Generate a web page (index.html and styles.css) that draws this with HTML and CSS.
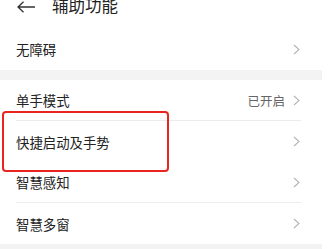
FILE: index.html
```html
<!DOCTYPE html>
<html lang="zh-CN">
<head>
  <meta charset="UTF-8">
  <meta name="viewport" content="width=device-width, initial-scale=1.0">
  <title>辅助功能</title>
  <link rel="stylesheet" href="styles.css">
</head>
<body>
  <div class="page">
    <div class="topbar">
      <svg class="back" width="19" height="12" viewBox="0 0 19 12">
        <path d="M1 6 H18 M6.5 0.8 L1 6 L6.5 11.2" fill="none" stroke="#333" stroke-width="1.3"/>
      </svg>
      <span class="title">辅助功能</span>
    </div>

    <div class="group first">
      <div class="row">
        <span class="label">无障碍</span>
        <span class="chev"><svg width="7" height="11" viewBox="0 0 7 11"><path d="M1 1 L6 5.5 L1 10" fill="none" stroke="#b4b4b4" stroke-width="1.1"/></svg></span>
      </div>
    </div>

    <div class="gap"></div>

    <div class="group">
      <div class="row line">
        <span class="label">单手模式</span>
        <span class="value">已开启</span>
        <span class="chev"><svg width="7" height="11" viewBox="0 0 7 11"><path d="M1 1 L6 5.5 L1 10" fill="none" stroke="#b4b4b4" stroke-width="1.1"/></svg></span>
      </div>
      <div class="row marked">
        <span class="label">快捷启动及手势</span>
        <span class="chev"><svg width="7" height="11" viewBox="0 0 7 11"><path d="M1 1 L6 5.5 L1 10" fill="none" stroke="#b4b4b4" stroke-width="1.1"/></svg></span>
        <div class="highlight"></div>
      </div>
      <div class="row line">
        <span class="label">智慧感知</span>
        <span class="chev"><svg width="7" height="11" viewBox="0 0 7 11"><path d="M1 1 L6 5.5 L1 10" fill="none" stroke="#b4b4b4" stroke-width="1.1"/></svg></span>
      </div>
      <div class="row">
        <span class="label">智慧多窗</span>
        <span class="chev"><svg width="7" height="11" viewBox="0 0 7 11"><path d="M1 1 L6 5.5 L1 10" fill="none" stroke="#b4b4b4" stroke-width="1.1"/></svg></span>
      </div>
    </div>

    <div class="gap"></div>
  </div>
</body>
</html>
```

FILE: styles.css
```css
body {
  margin: 0;
  padding: 0;
  background-color: #ffffff;
  font-family: "Noto Sans CJK SC", "Noto Sans", sans-serif;
  color: #222;
  overflow: hidden;
}

.page {
  width: 322px;
}

.topbar {
  display: flex;
  align-items: center;
  height: 16px;
  margin-top: -3px;
  padding-left: 17px;
}

.back {
  margin-top: 3px;
}

.title {
  margin-left: 16px;
  font-size: 16.5px;
  line-height: 16px;
  color: #222;
}

.group.first {
  margin-top: 15px;
}

.row {
  position: relative;
  display: flex;
  align-items: center;
  height: 41px;
  margin-left: 16px;
  padding-right: 22px;
}

.group.first .row {
  height: 42px;
}

.row.line {
  height: 40px;
  border-bottom: 1px solid #ececec;
  margin-right: 21px;
  padding-right: 1px;
}

.label {
  flex: 1;
  font-size: 13.4px;
  color: #222;
}

.value {
  font-size: 12.5px;
  color: #666;
  margin-right: 8px;
}

.chev {
  display: flex;
  align-items: center;
}

.gap {
  height: 10px;
  background-color: #f3f3f3;
}

.highlight {
  position: absolute;
  left: -14px;
  top: -10px;
  width: 163px;
  height: 57px;
  border: 2.5px solid #e8261f;
  border-radius: 4px;
  pointer-events: none;
}
```
